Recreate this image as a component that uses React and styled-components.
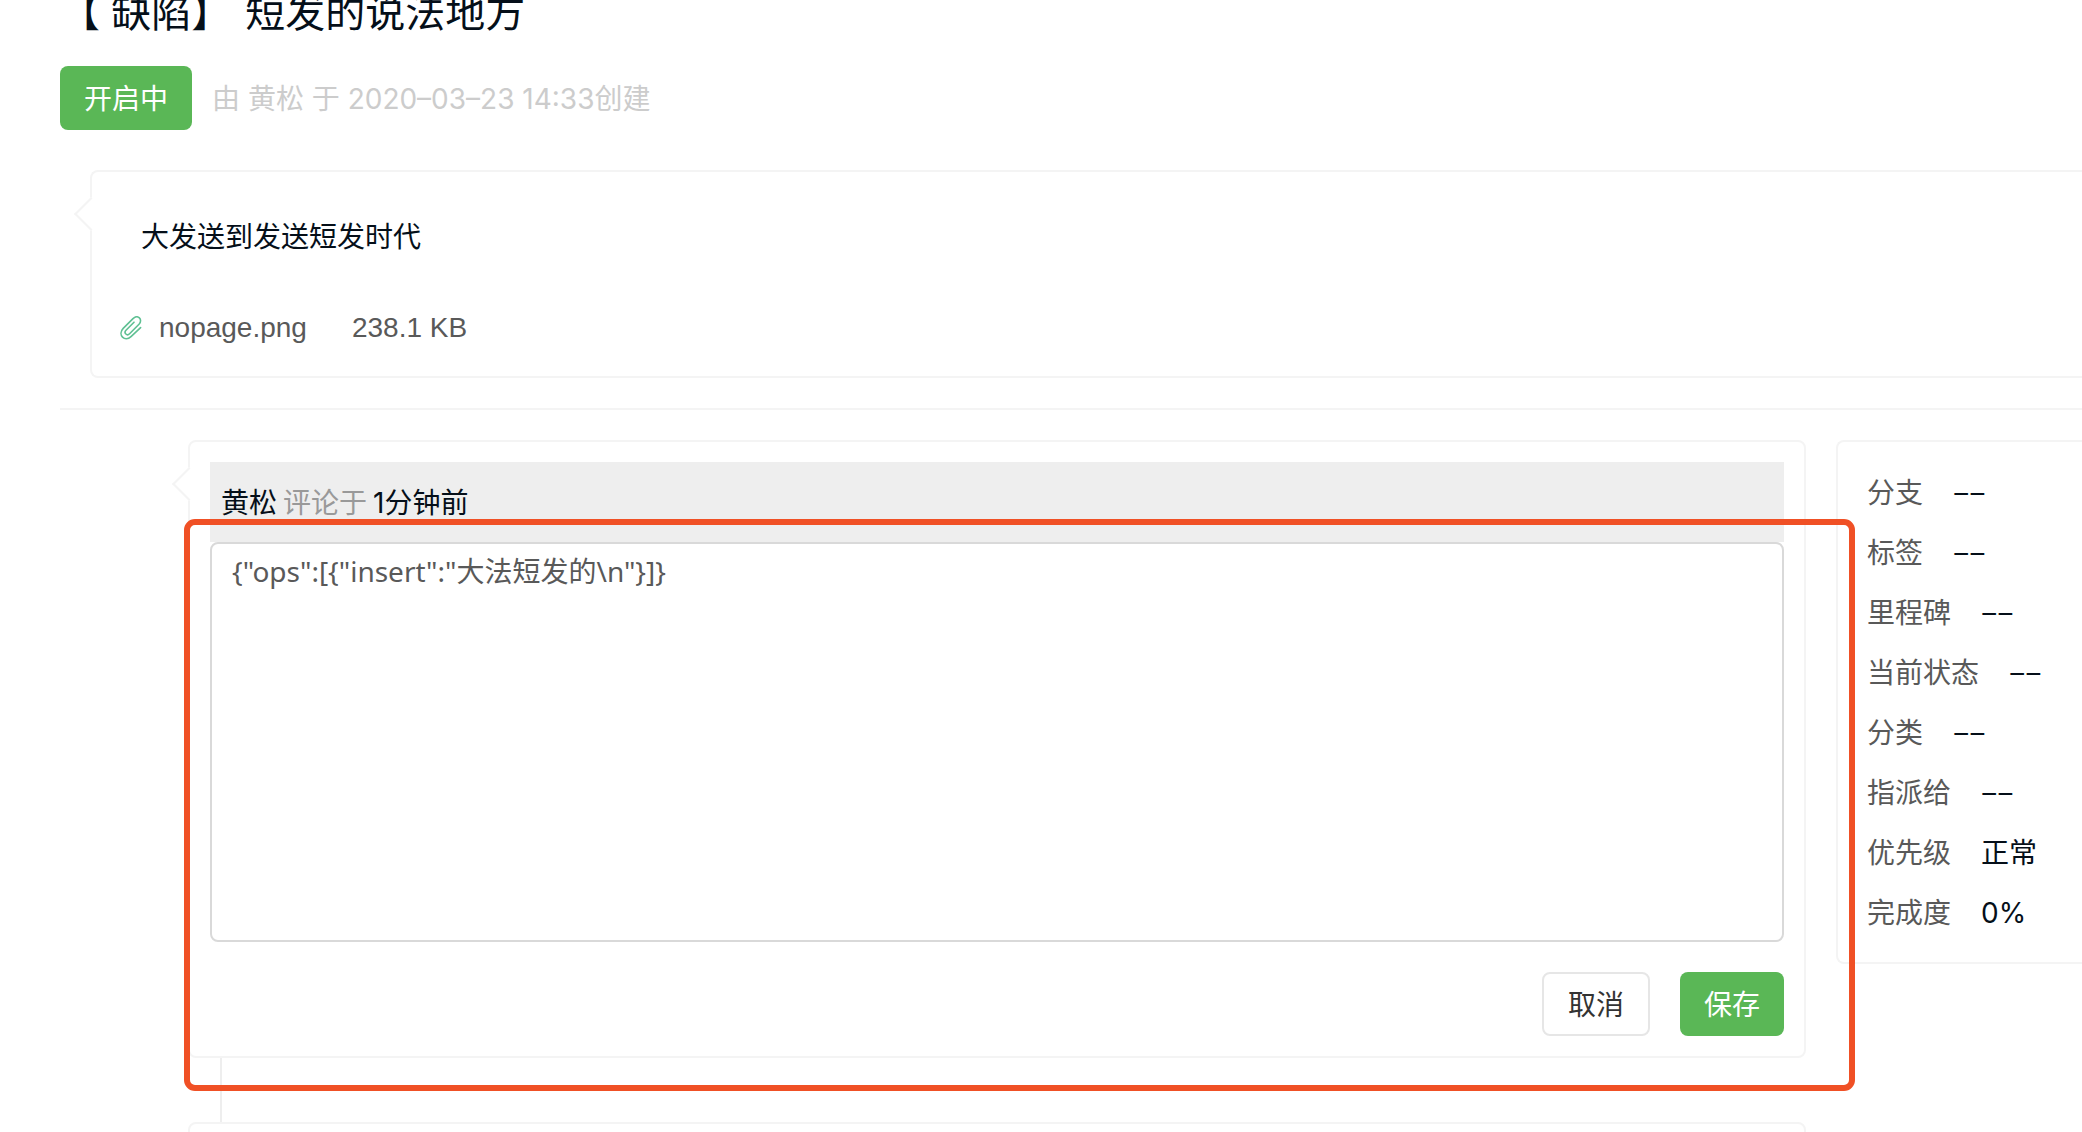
import React, { useState } from 'react';
import styled, { createGlobalStyle, css } from 'styled-components';

const GlobalStyle = createGlobalStyle`
  * {
    box-sizing: border-box;
  }
  body {
    margin: 0;
    background: #fff;
    color: #050f19;
    font: 28px/40px Inter, 'Noto Sans CJK SC', sans-serif;
  }
`;

const Page = styled.main`
  height: 100vh;
  overflow: hidden;
  padding-left: 60px;
`;

const Title = styled.h1`
  display: flex;
  gap: 14px;
  margin: 0;
  font-size: 40px;
  font-weight: 400;
  line-height: 26px;
`;

const StatusBar = styled.div`
  display: flex;
  align-items: center;
  gap: 20px;
  margin: 40px 0;
`;

const Button = styled.button`
  height: 64px;
  padding: 2px 24px 0;
  border: 2px solid #e6e6e6;
  border-radius: 8px;
  background: #fff;
  color: #333;
  font: inherit;
  cursor: pointer;

  ${(props) => props.$primary && css`
    border: 0;
    background: #5ab756;
    color: #fff;
  `}
`;

const Meta = styled.span`
  padding-top: 2px;
  color: #ccc;
`;

const cardBorder = '2px solid #f4f4f4';

const Card = styled.article`
  position: relative;
  border: ${cardBorder};
  border-radius: 8px;
`;

// little arrow that sticks out of the left side of a card
const BubbleCard = styled(Card)`
  &::before {
    content: '';
    position: absolute;
    top: 30px;
    left: -13px;
    width: 22px;
    height: 22px;
    border-left: ${cardBorder};
    border-bottom: ${cardBorder};
    background: #fff;
    transform: rotate(45deg);
  }
`;

const IssueCard = styled(BubbleCard)`
  margin-left: 30px;
  padding: 45px 28px 28px;
  border-right: 0;
  border-top-right-radius: 0;
  border-bottom-right-radius: 0;
`;

const IssueText = styled.p`
  margin: 0 0 51px;
  padding-left: 21px;
`;

const Attachment = styled.div`
  display: flex;
  align-items: center;
  color: #595959;
  font-family: 'Liberation Sans', sans-serif;

  svg {
    margin-right: 17px;
  }
`;

const FileLink = styled.a`
  margin-right: 45px;
  color: inherit;
  text-decoration: none;
`;

const Divider = styled.hr`
  height: 2px;
  margin: 30px 0;
  border: 0;
  background: #f4f4f4;
`;

const Columns = styled.div`
  display: grid;
  grid-template-columns: minmax(0, 1fr) 246px;
  align-items: start;
  gap: 30px;
`;

const Thread = styled.section`
  padding-left: 128px;
`;

const CommentCard = styled(BubbleCard)`
  padding: 20px;
`;

const CommentHead = styled.header`
  display: flex;
  gap: 6px;
  padding: 21px 11px 19px;
  background: #eee;
`;

const Muted = styled.span`
  color: #999;
`;

const Editor = styled.textarea`
  display: block;
  width: 100%;
  height: 400px;
  padding: 7px 20px;
  border: 2px solid #d9d9d9;
  border-radius: 8px;
  background: #fff;
  color: #595959;
  font: inherit;
  font-family: 'Noto Sans', 'Noto Sans CJK SC', sans-serif;
  resize: none;
  outline: none;
`;

const Actions = styled.div`
  display: flex;
  justify-content: flex-end;
  gap: 30px;
  margin-top: 30px;
`;

const Connector = styled.div`
  width: 2px;
  height: 64px;
  margin-left: 32px;
  background: #eee;
`;

const NextCard = styled(Card)`
  min-height: 120px;
`;

const Highlight = styled.div`
  position: absolute;
  top: 77px;
  right: -51px;
  bottom: -35px;
  left: -6px;
  border: 6px solid #f05025;
  border-radius: 11px;
  pointer-events: none;
  z-index: 1;
`;

const Side = styled.aside`
  padding: 21px 0 19px 29px;
  border: ${cardBorder};
  border-right: 0;
  border-radius: 8px 0 0 8px;
`;

const Fields = styled.dl`
  margin: 0;
`;

const Field = styled.div`
  display: flex;
  gap: 30px;
  height: 60px;
  line-height: 60px;
  white-space: nowrap;

  dt {
    color: #595959;
  }
  dd {
    margin: 0;
  }
`;

const Empty = styled.span`
  font-family: 'Liberation Sans', sans-serif;
`;

const fields = [
  ['分支'],
  ['标签'],
  ['里程碑'],
  ['当前状态'],
  ['分类'],
  ['指派给'],
  ['优先级', '正常'],
  ['完成度', '0%'],
];

function ClipIcon() {
  return (
    <svg width="22" height="24" viewBox="0 0 22 24" fill="none" stroke="#5fc093" strokeWidth="1.6" strokeLinecap="round" strokeLinejoin="round" aria-hidden="true">
      <path d="M14 6.2 L6 14.2 C3.4 17 7 20.4 9.6 17.8 L19 8.2 C23.4 3.4 17.6 -1.8 13 2.6 L3.2 12.4 C-2.8 18.8 4.8 26.4 11 20.6 L20.6 11.6" />
    </svg>
  );
}

export default function App() {
  const [comment, setComment] = useState('{"ops":[{"insert":"大法短发的\\n"}]}');

  return (
    <Page>
      <GlobalStyle />
      <Title>
        <span>【 缺陷】</span>
        <span>短发的说法地方</span>
      </Title>
      <StatusBar>
        <Button type="button" $primary>开启中</Button>
        <Meta>由 黄松 于 2020–03–23 14:33创建</Meta>
      </StatusBar>

      <IssueCard>
        <IssueText>大发送到发送短发时代</IssueText>
        <Attachment>
          <ClipIcon />
          <FileLink href="#nopage">nopage.png</FileLink>
          <span>238.1 KB</span>
        </Attachment>
      </IssueCard>

      <Divider />

      <Columns>
        <Thread>
          <CommentCard>
            <CommentHead>
              <span>黄松</span>
              <Muted>评论于</Muted>
              <span>1分钟前</span>
            </CommentHead>
            <Editor
              aria-label="评论"
              spellCheck={false}
              value={comment}
              onChange={(e) => setComment(e.target.value)}
            />
            <Actions>
              <Button type="button">取消</Button>
              <Button type="button" $primary>保存</Button>
            </Actions>
            <Highlight />
          </CommentCard>
          <Connector />
          <NextCard />
        </Thread>
        <Side>
          <Fields>
            {fields.map(([label, value]) => (
              <Field key={label}>
                <dt>{label}</dt>
                <dd>{value || <Empty>−−</Empty>}</dd>
              </Field>
            ))}
          </Fields>
        </Side>
      </Columns>
    </Page>
  );
}
